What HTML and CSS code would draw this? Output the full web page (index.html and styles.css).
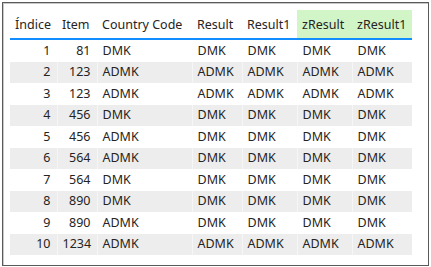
FILE: index.html
```html
<!DOCTYPE html>
<html>
<head>
<meta charset="utf-8">
<link rel="stylesheet" href="styles.css">
</head>
<body>
<div class="frame">
  <table class="grid">
    <colgroup>
      <col class="c1"><col class="c2"><col class="c3"><col class="c4"><col class="c5"><col class="c6"><col class="c7">
    </colgroup>
    <thead>
      <tr>
        <th>Índice</th><th>Item</th><th>Country Code</th><th>Result</th><th>Result1</th><th class="hl">zResult</th><th class="hl">zResult1</th>
      </tr>
    </thead>
    <tbody>
      <tr><td class="num">1</td><td class="num">81</td><td>DMK</td><td>DMK</td><td>DMK</td><td>DMK</td><td>DMK</td></tr>
      <tr><td class="num">2</td><td class="num">123</td><td>ADMK</td><td>ADMK</td><td>ADMK</td><td>ADMK</td><td>ADMK</td></tr>
      <tr><td class="num">3</td><td class="num">123</td><td>ADMK</td><td>ADMK</td><td>ADMK</td><td>ADMK</td><td>ADMK</td></tr>
      <tr><td class="num">4</td><td class="num">456</td><td>DMK</td><td>DMK</td><td>DMK</td><td>DMK</td><td>DMK</td></tr>
      <tr><td class="num">5</td><td class="num">456</td><td>ADMK</td><td>DMK</td><td>DMK</td><td>DMK</td><td>DMK</td></tr>
      <tr><td class="num">6</td><td class="num">564</td><td>ADMK</td><td>DMK</td><td>DMK</td><td>DMK</td><td>DMK</td></tr>
      <tr><td class="num">7</td><td class="num">564</td><td>DMK</td><td>DMK</td><td>DMK</td><td>DMK</td><td>DMK</td></tr>
      <tr><td class="num">8</td><td class="num">890</td><td>DMK</td><td>DMK</td><td>DMK</td><td>DMK</td><td>DMK</td></tr>
      <tr><td class="num">9</td><td class="num">890</td><td>ADMK</td><td>DMK</td><td>DMK</td><td>DMK</td><td>DMK</td></tr>
      <tr><td class="num">10</td><td class="num">1234</td><td>ADMK</td><td>ADMK</td><td>ADMK</td><td>ADMK</td><td>ADMK</td></tr>
    </tbody>
  </table>
</div>
</body>
</html>
```
FILE: styles.css
```css
html, body {
  margin: 0;
  padding: 0;
  background: #ffffff;
}
body {
  padding: 2px;
  width: 431px;
  height: 267px;
  box-sizing: border-box;
}
.frame {
  width: 427px;
  height: 264px;
  box-sizing: border-box;
  border: 1px solid #5a5a5a;
  box-shadow: inset 1px 1px 0 #c8c8c8;
  padding: 7px 0 0 7px;
  font-family: "Noto Sans", "Open Sans", sans-serif;
  font-size: 12.5px;
  color: #252423;
}
.grid {
  border-collapse: collapse;
  table-layout: fixed;
  width: 402px;
}
.c1 { width: 47px; }
.c2 { width: 40px; }
.c3 { width: 95px; }
.c4 { width: 50px; }
.c5 { width: 55px; }
.c6 { width: 55px; }
.c7 { width: 60px; }
th {
  font-weight: normal;
  text-align: left;
  height: 28px;
  padding: 0 5px;
  vertical-align: middle;
  white-space: nowrap;
  border-bottom: 2px solid #118dff;
}
th.hl {
  background: #d2f5c8;
}
td {
  height: 21.5px;
  padding: 0 5px;
  white-space: nowrap;
  vertical-align: middle;
  line-height: 16px;
  border-left: 1px solid rgba(255,255,255,0.5);
}
td:first-child { border-left: none; }
td.num {
  text-align: right;
  padding-right: 6px;
}
tbody tr:nth-child(even) td {
  background: #ededed;
}
```
